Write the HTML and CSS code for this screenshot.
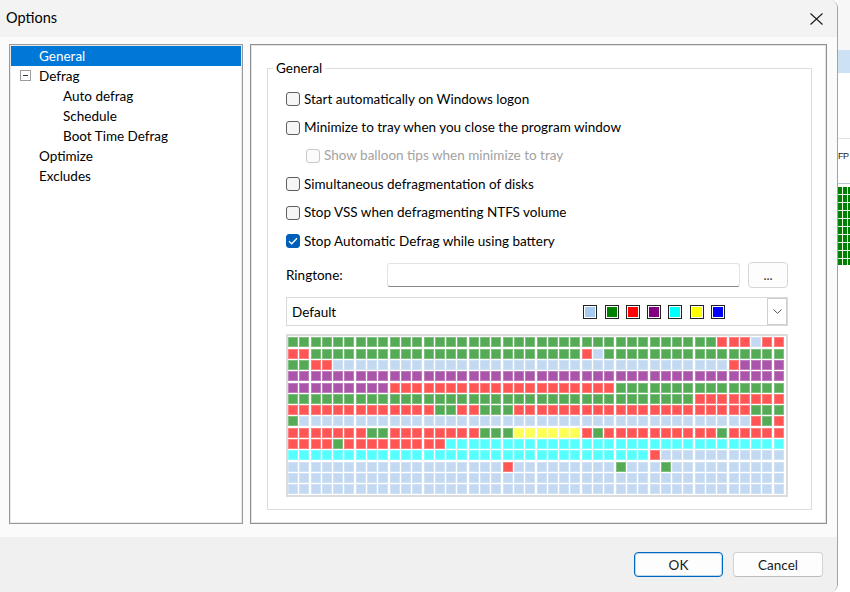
FILE: index.html
```html
<!DOCTYPE html>
<html lang="en">
<head>
    <meta charset="UTF-8">
    <title>Options</title>
    <link rel="stylesheet" href="styles.css">
</head>
<body>
    <div class="screen">
        <div class="dialog">
            <div class="titlebar">
                <span class="title">Options</span>
                <svg class="close" width="13" height="12" viewBox="0 0 13 12">
                    <path d="M0.5 0.5L12.5 11.5M12.5 0.5L0.5 11.5" stroke="#1b1b1b" stroke-width="1.1" fill="none"/>
                </svg>
            </div>

            <div class="content">
                <ul class="tree">
                    <li class="node selected">General</li>
                    <li class="node parent"><span class="toggle"></span>Defrag</li>
                    <li class="node child">Auto defrag</li>
                    <li class="node child">Schedule</li>
                    <li class="node child">Boot Time Defrag</li>
                    <li class="node">Optimize</li>
                    <li class="node">Excludes</li>
                </ul>

                <div class="panel">
                    <fieldset class="group">
                        <legend>General</legend>
                        <div class="check"><span class="box"></span>Start automatically on Windows logon</div>
                        <div class="check"><span class="box"></span>Minimize to tray when you close the program window</div>
                        <div class="check sub disabled"><span class="box"></span>Show balloon tips when minimize to tray</div>
                        <div class="check"><span class="box"></span>Simultaneous defragmentation of disks</div>
                        <div class="check"><span class="box"></span>Stop VSS when defragmenting NTFS volume</div>
                        <div class="check"><span class="box checked">
                            <svg width="10" height="8" viewBox="0 0 10 8"><path d="M1 4.2L3.7 6.8L9 1.2" stroke="#fff" stroke-width="1.3" fill="none"/></svg>
                        </span>Stop Automatic Defrag while using battery</div>

                        <div class="ringtone">
                            <span class="ring-label">Ringtone:</span>
                            <div class="ring-input"></div>
                            <button class="ring-btn">...</button>
                        </div>

                        <div class="combo">
                            <span class="combo-text">Default</span>
                            <div class="swatches">
                                <span class="swatch"><i class="s-lb"></i></span>
                                <span class="swatch"><i class="s-g"></i></span>
                                <span class="swatch"><i class="s-r"></i></span>
                                <span class="swatch"><i class="s-p"></i></span>
                                <span class="swatch"><i class="s-c"></i></span>
                                <span class="swatch"><i class="s-y"></i></span>
                                <span class="swatch"><i class="s-b"></i></span>
                            </div>
                            <div class="combo-arrow">
                                <svg width="9" height="5" viewBox="0 0 9 5"><path d="M0.5 0.5L4.5 4.3L8.5 0.5" stroke="#555" stroke-width="1" fill="none"/></svg>
                            </div>
                        </div>

                        <div class="map"><div class="cells" id="cells"></div></div>
                    </fieldset>
                </div>
            </div>

            <div class="footer">
                <button class="btn default">OK</button>
                <button class="btn cancel">Cancel</button>
            </div>
        </div>

        <div class="behind">
            <div class="bh-top"></div>
            <div class="bh-band"></div>
            <div class="bh-gap"></div>
            <div class="bh-label">FP</div>
            <div class="bh-blocks"></div>
        </div>
    </div>

    <script>
        // disk map rows, run-length: "38G 3R L" -> 38 green, 3 red, 1 light blue
        const rows = [
            '38G 3R L 2R',
            '2R 24G R L 16G',
            '2G 2R 35L R 4P',
            '44P',
            '9P 20R 15G',
            '36G 8R',
            '13R 2G 2R 3G 21R 3G',
            'G 40L R G R',
            '7R 2G 8R 3G 6Y R G 10R G 5R',
            '4R G 9R 30C',
            '32C R 11L',
            '19L R 9L G 3L G 10L',
            '44L',
            '44L'
        ];

        const cells = document.getElementById('cells');
        rows.forEach(function(row) {
            row.split(' ').forEach(function(tok) {
                const kind = tok.slice(-1);
                const n = parseInt(tok.slice(0, -1)) || 1;
                for (let i = 0; i < n; i++) {
                    const c = document.createElement('span');
                    c.className = 'cell ' + kind;
                    cells.appendChild(c);
                }
            });
        });
    </script>
</body>
</html>
```

FILE: styles.css
```css
* {
    margin: 0;
    padding: 0;
    box-sizing: border-box;
}

body {
    font-family: "Segoe UI", Lato, "Noto Sans", sans-serif;
    font-size: 13.5px;
    color: #000;
    background: #fff;
}

.screen {
    display: flex;
    width: 850px;
    height: 592px;
    overflow: hidden;
}

.dialog {
    width: 838px;
    height: 592px;
    flex-shrink: 0;
    display: flex;
    flex-direction: column;
    background: #fbfbfb;
    border-right: 1px solid #a3a3a3;
    border-radius: 0 8px 8px 0;
    overflow: hidden;
}

.titlebar {
    height: 37px;
    background: #f3f3f3;
    display: flex;
    align-items: center;
    justify-content: space-between;
    padding: 0 14px 0 6px;
}

.title {
    font-size: 14.5px;
    margin-top: -2px;
}

.content {
    display: flex;
    gap: 7px;
    padding: 7px 10px 0 9px;
    height: 500px;
}

/* tree */
.tree {
    list-style: none;
    width: 234px;
    height: 480px;
    border: 1px solid #9a9a9a;
    box-shadow: inset 0 0 0 1px #e8e8e8;
    background: #fff;
    padding: 1px;
}

.node {
    height: 20px;
    display: flex;
    align-items: center;
    padding-left: 28px;
    padding-bottom: 1px;
}

.node.parent {
    padding-left: 9px;
}

.node.child {
    padding-left: 52px;
}

.node.selected {
    background: #0078d7;
    color: #fff;
}

.toggle {
    position: relative;
    width: 11px;
    height: 11px;
    margin-right: 8px;
    border: 1px solid #9b9b9b;
    background: #fff;
}

.toggle::after {
    content: "";
    position: absolute;
    left: 2px;
    top: 4px;
    width: 5px;
    height: 1px;
    background: #333;
}

/* right panel */
.panel {
    width: 577px;
    height: 480px;
    border: 1px solid #8f8f8f;
    box-shadow: inset 0 0 0 1px #e4e4e4;
    background: #fff;
    padding: 14px 14px 13px 16px;
}

.group {
    height: 100%;
    border: 1px solid #dcdcdc;
    padding: 8px 23px 0 18px;
}

.group legend {
    margin-left: -13px;
    padding: 0 3px;
    line-height: 18px;
}

.check {
    display: flex;
    align-items: center;
    gap: 4px;
    height: 28.4px;
    padding-bottom: 1px;
}

.check.sub {
    padding-left: 20px;
}

.check.disabled {
    color: #a2a2a2;
}

.box {
    width: 14px;
    height: 14px;
    margin-top: 1px;
    border: 1px solid #5e5e5e;
    border-radius: 3px;
    background: #f6f6f6;
    display: flex;
    align-items: center;
    justify-content: center;
}

.disabled .box {
    border-color: #c8c8c8;
    background: #fbfbfb;
}

.box.checked {
    background: #005fb8;
    border-color: #005fb8;
}

.ringtone {
    display: flex;
    align-items: center;
    height: 26px;
    margin-top: 7px;
}

.ring-label {
    width: 101px;
}

.ring-input {
    width: 353px;
    height: 24px;
    border: 1px solid #e3e3e3;
    border-bottom-color: #8a8a8a;
    border-radius: 3px;
    background: #fff;
}

.ring-btn {
    width: 40px;
    height: 26px;
    margin-left: 8px;
    border: 1px solid #d6d6d6;
    border-radius: 4px;
    background: #fdfdfd;
    font-family: inherit;
    font-size: 13px;
    color: #333;
}

.combo {
    display: flex;
    align-items: center;
    height: 29px;
    margin-top: 9px;
    border: 1px solid #d9d9d9;
    background: #fff;
    padding-left: 5px;
}

.combo-text {
    flex: 1;
}

.swatches {
    display: flex;
    gap: 7.3px;
    margin-right: 42px;
}

.swatch {
    width: 14px;
    height: 14px;
    border: 1px solid #222;
    padding: 1px;
    background: #fff;
}

.swatch i {
    display: block;
    width: 100%;
    height: 100%;
}

.s-lb { background: #a6caf0; }
.s-g { background: #008000; }
.s-r { background: #ff0000; }
.s-p { background: #800080; }
.s-c { background: #00ffff; }
.s-y { background: #ffff00; }
.s-b { background: #0000ff; }

.combo-arrow {
    width: 20px;
    height: 27px;
    border: 1px solid #cfcfcf;
    display: flex;
    align-items: center;
    justify-content: center;
}

.map {
    width: 502px;
    height: 163px;
    margin-top: 8px;
    border: 2px solid #dcdcdc;
    padding-top: 1px;
    background: #fff;
}

.cells {
    display: grid;
    grid-template-columns: repeat(44, 10px);
    grid-auto-rows: 10px;
    gap: 1.3px;
}

.cell {
    box-shadow: inset 0 0 0 1px rgba(255, 255, 255, 0.25);
}

.cell.G { background: #55aa55; }
.cell.R { background: #ff5555; }
.cell.L { background: #c2d9f1; }
.cell.P { background: #aa55aa; }
.cell.C { background: #55ffff; }
.cell.Y { background: #ffff55; }

/* buttons */
.footer {
    flex: 1;
    background: #f0f0f0;
    display: flex;
    justify-content: flex-end;
    gap: 10px;
    padding: 15px 14px 0 0;
}

.btn {
    width: 89px;
    height: 25px;
    border: 1px solid #d3d3d3;
    border-bottom-color: #bdbdbd;
    border-radius: 4px;
    background: #fdfdfd;
    font-family: inherit;
    font-size: 13.5px;
    color: #1a1a1a;
}

.btn.default {
    border-color: #0067c0;
    box-shadow: inset 0 0 0 1px rgba(0, 103, 192, 0.25);
}

.btn.cancel {
    width: 90px;
}

/* window behind the dialog */
.behind {
    flex: 1;
    display: flex;
    flex-direction: column;
    background: #fff;
    overflow: hidden;
}

.bh-top {
    height: 50px;
    background: #f7f7f7;
}

.bh-band {
    height: 23px;
    background: #cde1f4;
}

.bh-gap {
    height: 66px;
    border-bottom: 1px solid #e2e2e2;
}

.bh-label {
    height: 45px;
    padding-top: 12px;
    font-family: "Liberation Sans", sans-serif;
    font-size: 9px;
    letter-spacing: -0.5px;
    color: #222;
    border-bottom: 1px solid #b8c6d6;
}

.bh-blocks {
    height: 78px;
    margin-top: 3px;
    background-color: #008000;
    background-image:
        repeating-linear-gradient(90deg, transparent 0 4px, #e8f2e8 4px 5px),
        repeating-linear-gradient(180deg, transparent 0 7px, #e8f2e8 7px 8px);
}
```
